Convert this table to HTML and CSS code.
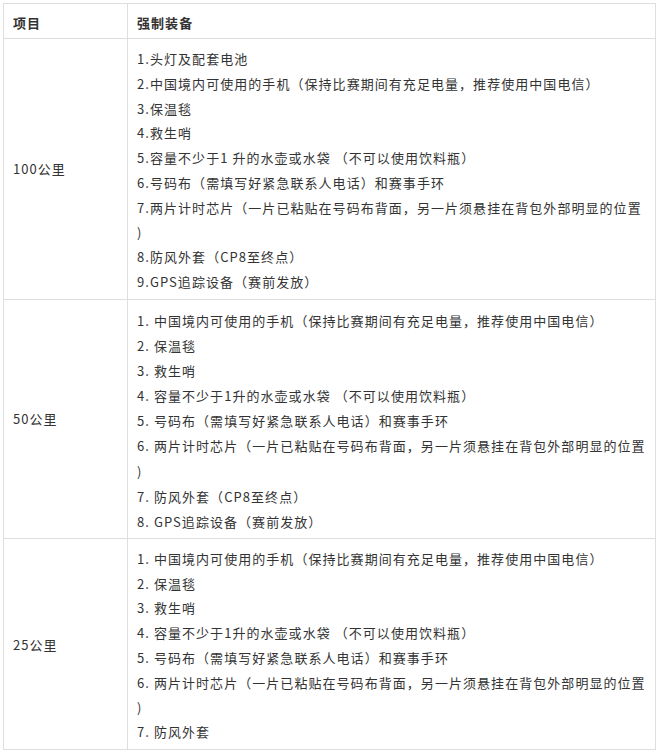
FILE: index.html
```html
<!DOCTYPE html>
<html lang="zh-CN">
<head>
<meta charset="utf-8">
<link rel="stylesheet" href="styles.css">
</head>
<body>
<table class="gear">
  <colgroup>
    <col class="col-item">
    <col class="col-gear">
  </colgroup>
  <thead>
    <tr><th>项目</th><th>强制装备</th></tr>
  </thead>
  <tbody>
    <tr>
      <td class="cell-item">100公里</td>
      <td class="cell-gear">
        <p>1.头灯及配套电池</p>
        <p>2.中国境内可使用的手机（保持比赛期间有充足电量，推荐使用中国电信）</p>
        <p>3.保温毯</p>
        <p>4.救生哨</p>
        <p>5.容量不少于1 升的水壶或水袋 （不可以使用饮料瓶）</p>
        <p>6.号码布（需填写好紧急联系人电话）和赛事手环</p>
        <p>7.两片计时芯片（一片已粘贴在号码布背面，另一片须悬挂在背包外部明显的位置<br>)</p>
        <p>8.防风外套（CP8至终点）</p>
        <p>9.GPS追踪设备（赛前发放）</p>
      </td>
    </tr>
    <tr>
      <td class="cell-item">50公里</td>
      <td class="cell-gear cell-gear--loose">
        <p>1. 中国境内可使用的手机（保持比赛期间有充足电量，推荐使用中国电信）</p>
        <p>2. 保温毯</p>
        <p>3. 救生哨</p>
        <p>4. 容量不少于1升的水壶或水袋 （不可以使用饮料瓶）</p>
        <p>5. 号码布（需填写好紧急联系人电话）和赛事手环</p>
        <p>6. 两片计时芯片（一片已粘贴在号码布背面，另一片须悬挂在背包外部明显的位置<br>)</p>
        <p>7. 防风外套（CP8至终点）</p>
        <p>8. GPS追踪设备（赛前发放）</p>
      </td>
    </tr>
    <tr>
      <td class="cell-item">25公里</td>
      <td class="cell-gear">
        <p>1. 中国境内可使用的手机（保持比赛期间有充足电量，推荐使用中国电信）</p>
        <p>2. 保温毯</p>
        <p>3. 救生哨</p>
        <p>4. 容量不少于1升的水壶或水袋 （不可以使用饮料瓶）</p>
        <p>5. 号码布（需填写好紧急联系人电话）和赛事手环</p>
        <p>6. 两片计时芯片（一片已粘贴在号码布背面，另一片须悬挂在背包外部明显的位置<br>)</p>
        <p>7. 防风外套</p>
      </td>
    </tr>
  </tbody>
</table>
</body>
</html>
```

FILE: styles.css
```css
html, body {
  margin: 0;
  padding: 0;
  background: #ffffff;
}

body {
  font-family: "Noto Sans CJK SC", "Liberation Sans", sans-serif;
  font-size: 13px;
  color: #333333;
}

.gear {
  border-collapse: collapse;
  table-layout: fixed;
  margin: 3px 0 0 3px;
  width: 653px;
  letter-spacing: 1.05px;
}

.col-item {
  width: 124px;
}

.gear th,
.gear td {
  border: 1px solid #dedede;
  text-align: left;
  padding: 0 9px;
}

.gear th {
  font-weight: 600;
  height: 35px;
  padding-top: 3px;
  padding-bottom: 0;
  box-sizing: border-box;
  vertical-align: middle;
}

.cell-item {
  vertical-align: middle;
}

.gear .cell-gear {
  padding-top: 8px;
  padding-bottom: 4px;
}

.cell-gear p {
  margin: 0;
  line-height: 24.8px;
  white-space: nowrap;
}

.cell-gear--loose p {
  line-height: 25.1px;
}
```
